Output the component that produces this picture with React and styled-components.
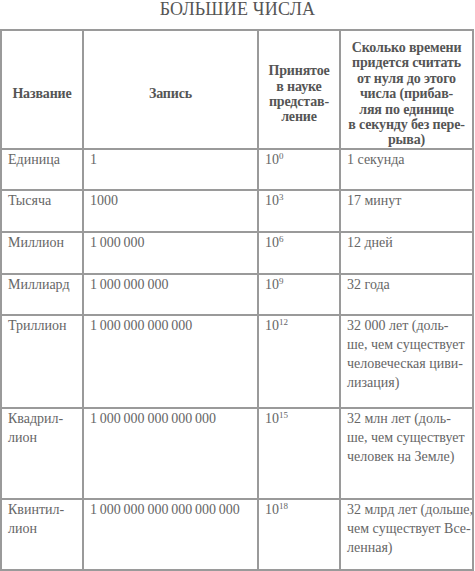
import React from "react";
import styled, { createGlobalStyle } from "styled-components";

const GlobalStyle = createGlobalStyle`
  html, body {
    margin: 0;
    background: #fff;
    overflow: hidden;
    font-family: "Liberation Serif", "Times New Roman", serif;
    color: #555;
  }
`;

const rows = [
  { name: ["Единица"], num: "1", exp: "0", time: ["1 секунда"], h: 41 },
  { name: ["Тысяча"], num: "1000", exp: "3", time: ["17 минут"], h: 42 },
  { name: ["Миллион"], num: "1 000 000", exp: "6", time: ["12 дней"], h: 42 },
  { name: ["Миллиард"], num: "1 000 000 000", exp: "9", time: ["32 года"], h: 41 },
  {
    name: ["Триллион"],
    num: "1 000 000 000 000",
    exp: "12",
    time: ["32 000 лет (доль-", "ше, чем существует", "человеческая циви-", "лизация)"],
    h: 93,
  },
  {
    name: ["Квадрил-", "лион"],
    num: "1 000 000 000 000 000",
    exp: "15",
    time: ["32 млн лет (доль-", "ше, чем существует", "человек на Земле)"],
    h: 91,
  },
  {
    name: ["Квинтил-", "лион"],
    num: "1 000 000 000 000 000 000",
    exp: "18",
    time: ["32 млрд лет (дольше,", "чем существует Все-", "ленная)"],
    h: 71,
  },
];

function Lines({ items }) {
  return items.map((t, i) => (
    <React.Fragment key={i}>
      {i > 0 && <br />}
      {t}
    </React.Fragment>
  ));
}

export default function App() {
  return (
    <Page>
      <GlobalStyle />
      <Title>БОЛЬШИЕ ЧИСЛА</Title>
      <Table>
        <colgroup>
          <col style={{ width: 82 }} />
          <col style={{ width: 175 }} />
          <col style={{ width: 82 }} />
          <col />
        </colgroup>
        <thead>
          <tr>
            <Th>Название</Th>
            <Th>Запись</Th>
            <Th>
              <Lines items={["Принятое", "в науке", "представ-", "ление"]} />
            </Th>
            <Th>
              <Lines
                items={[
                  "Сколько времени",
                  "придется считать",
                  "от нуля до этого",
                  "числа (прибав-",
                  "ляя по единице",
                  "в секунду без пере-",
                  "рыва)",
                ]}
              />
            </Th>
          </tr>
        </thead>
        <tbody>
          {rows.map((r, i) => (
            <Row key={i} $h={r.h}>
              <Td>
                <Lines items={r.name} />
              </Td>
              <Td>{r.num.replace(/ /g, "\u2009")}</Td>
              <Td>
                10<Sup>{r.exp}</Sup>
              </Td>
              <Td>
                <Lines items={r.time} />
              </Td>
            </Row>
          ))}
        </tbody>
      </Table>
    </Page>
  );
}

const Page = styled.div`
  width: 475px;
  display: flex;
  flex-direction: column;
  align-items: stretch;
`;

const Title = styled.h1`
  margin: 0;
  height: 29px;
  text-align: center;
  font-size: 18px;
  font-weight: normal;
  line-height: 19px;
  color: #555;
  letter-spacing: 0.2px;
`;

const Table = styled.table`
  width: 474px;
  border-collapse: collapse;
  table-layout: fixed;
  border: 2px solid #9a9a9a;
`;

const Th = styled.th`
  height: 107px;
  padding: 9px 2px 0;
  border: 2px solid #9a9a9a;
  font-size: 14px;
  line-height: 15.4px;
  font-weight: bold;
  text-align: center;
  vertical-align: middle;
  color: #555;
  white-space: nowrap;
  letter-spacing: -0.15px;
`;

const Row = styled.tr`
  height: ${(p) => p.$h}px;
`;

const Td = styled.td`
  padding: 0 5px 0 6px;
  border: 2px solid #9a9a9a;
  font-size: 14px;
  line-height: 19px;
  vertical-align: top;
  color: #666;
  white-space: nowrap;
`;

const Sup = styled.sup`
  font-size: 9px;
  line-height: 0;
  vertical-align: 5px;
`;
